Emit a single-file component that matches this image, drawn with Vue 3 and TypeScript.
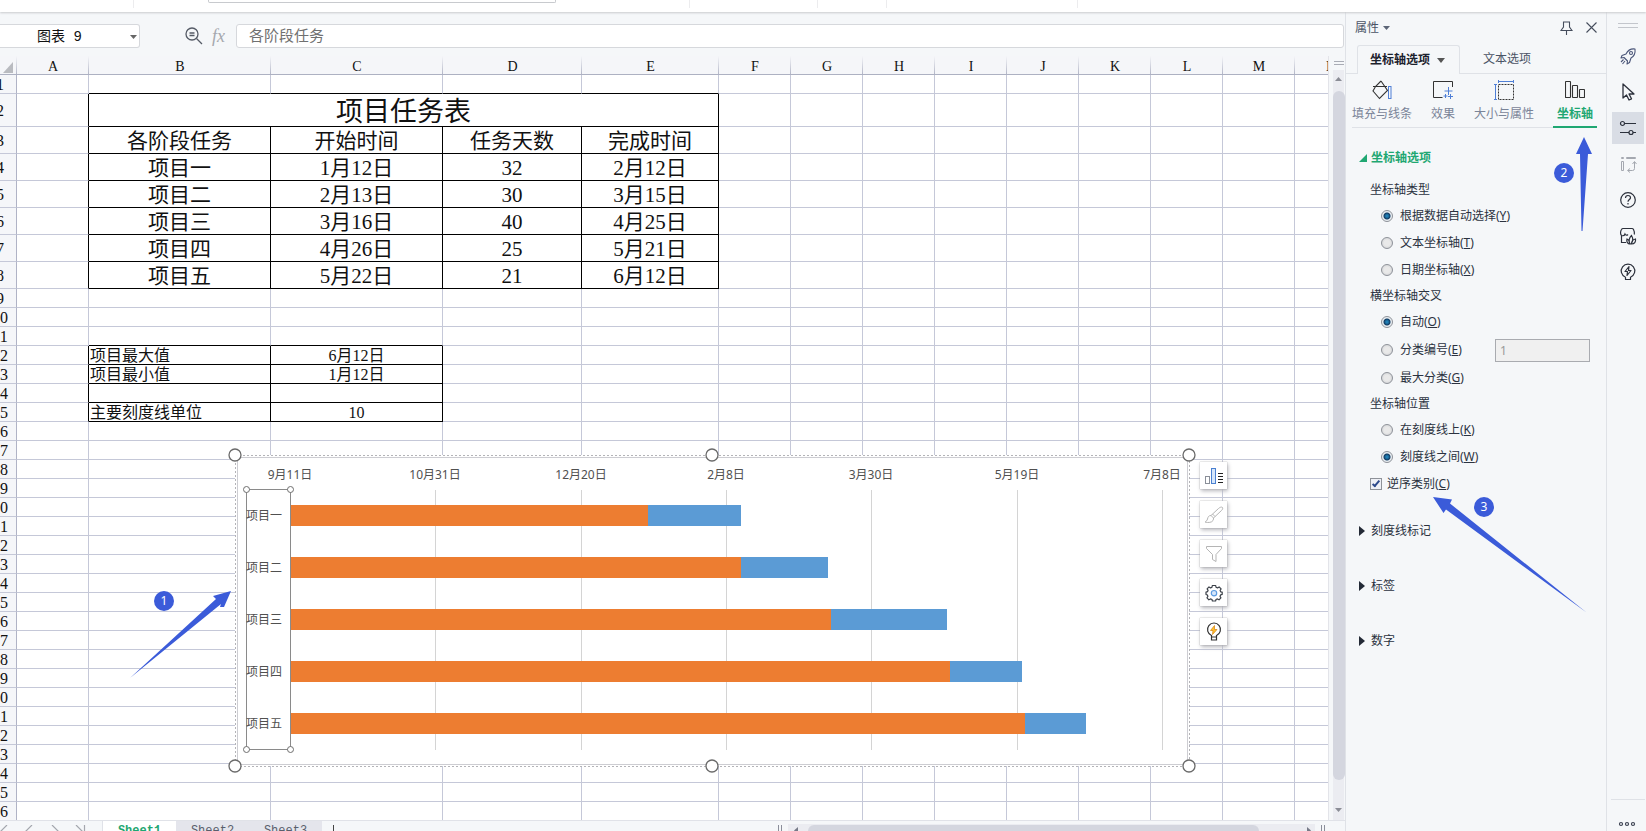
<script setup lang="ts">
import { ref } from 'vue'

interface Cell {
  key: string
  text: string
  span: number
  cls: string[]
}

interface SheetRow {
  n: number
  cls: string
  cells: Cell[]
}

const letters = ['A', 'B', 'C', 'D', 'E', 'F', 'G', 'H', 'I', 'J', 'K', 'L', 'M', 'N']

const values: Record<number, string[]> = {
  2: ['项目任务表'],
  3: ['各阶段任务', '开始时间', '任务天数', '完成时间'],
  4: ['项目一', '1月12日', '32', '2月12日'],
  5: ['项目二', '2月13日', '30', '3月15日'],
  6: ['项目三', '3月16日', '40', '4月25日'],
  7: ['项目四', '4月26日', '25', '5月21日'],
  8: ['项目五', '5月22日', '21', '6月12日'],
  12: ['项目最大值', '6月12日'],
  13: ['项目最小值', '1月12日'],
  14: ['', ''],
  15: ['主要刻度线单位', '10'],
}

function framedColumns(row: number): number {
  if (row >= 2 && row <= 8) return 4
  if (row >= 12 && row <= 15) return 2
  return 0
}

function buildRow(n: number): SheetRow {
  const here = framedColumns(n)
  const below = framedColumns(n + 1)
  const cells: Cell[] = []
  for (let c = 0; c < letters.length; c++) {
    const merged = n === 2 && c === 1
    const span = merged ? 4 : 1
    const last = c + span - 1
    const cls: string[] = []
    if (here > 0 && last <= here) cls.push('dark-right')
    if (c > 0 && (c <= here || c <= below)) cls.push('dark-bottom')
    if (n >= 12 && c === 1) cls.push('left')
    cells.push({
      key: letters[c] + n,
      text: c > 0 ? values[n]?.[c - 1] ?? '' : '',
      span,
      cls,
    })
    c = last
  }
  const cls = n === 2 ? 'title-row' : n >= 3 && n <= 8 ? 'task-row' : ''
  return { n, cls, cells }
}

const rows: SheetRow[] = Array.from({ length: 36 }, (_, i) => buildRow(i + 1))

const plot = { left: 63, top: 43, right: 935, bottom: 303, days: 300 }
const dayX = (d: number) => Math.round(plot.left + (d * (plot.right - plot.left)) / plot.days)
const ticks = ['9月11日', '10月31日', '12月20日', '2月8日', '3月30日', '5月19日', '7月8日'].map((label, i) => ({
  label,
  x: dayX(i * 50),
}))
const bars = [
  { name: '项目一', start: 123, days: 32 },
  { name: '项目二', start: 155, days: 30 },
  { name: '项目三', start: 186, days: 40 },
  { name: '项目四', start: 227, days: 25 },
  { name: '项目五', start: 253, days: 21 },
].map((b, i) => ({ ...b, y: 58 + i * 52, x1: dayX(b.start), x2: dayX(b.start + b.days) }))
const handles = [8, 485, 962].flatMap((x) => [8, 319].map((y) => ({ x, y })))
const axisHandles = [19, 63].flatMap((x) => [42, 302].map((y) => ({ x, y })))

const groups = [
  {
    name: 'type',
    title: '坐标轴类型',
    options: [
      { label: '根据数据自动选择', key: 'Y' },
      { label: '文本坐标轴', key: 'T' },
      { label: '日期坐标轴', key: 'X' },
    ],
  },
  {
    name: 'cross',
    title: '横坐标轴交叉',
    options: [
      { label: '自动', key: 'O' },
      { label: '分类编号', key: 'E' },
      { label: '最大分类', key: 'G' },
    ],
  },
  {
    name: 'position',
    title: '坐标轴位置',
    options: [
      { label: '在刻度线上', key: 'K' },
      { label: '刻度线之间', key: 'W' },
    ],
  },
]
const picked = ref<Record<string, string>>({ type: 'Y', cross: 'O', position: 'W' })
const reversed = ref(true)
const category = ref('1')
const formula = ref('各阶段任务')
const collapsed = ['刻度线标记', '标签', '数字']
</script>

<template>
  <div class="app">
    <header class="ribbon">
      <div class="ribbon-box"></div>
      <i class="sep s1"></i><i class="sep s2"></i><i class="sep s3"></i><i class="sep s4"></i><i class="sep s5"></i>
    </header>

    <div class="body">
      <main class="work">
        <div class="formula-row">
          <button class="name-box" type="button">
            <span>图表 9</span>
            <svg width="7" height="4" viewBox="0 0 7 4"><path d="M0 0h7L3.500 4z" fill="#666" /></svg>
          </button>
          <div class="fx-tools">
            <svg width="18" height="18" viewBox="0 0 18 18" fill="none" stroke="#555b66" stroke-width="1.300">
              <circle cx="7" cy="7" r="6" /><path d="M11.500 11.500L17 17M4.500 6h5M4.500 8.500h5" />
            </svg>
            <span class="fx">fx</span>
          </div>
          <input v-model="formula" class="formula" type="text" aria-label="编辑栏" />
        </div>

        <div class="sheet-area">
          <div class="sheet">
            <table class="grid">
              <colgroup>
                <col class="c-num" /><col class="c-std" /><col class="c-b" /><col class="c-c" /><col class="c-d" /><col class="c-e" />
                <col v-for="i in 9" :key="i" class="c-std" />
              </colgroup>
              <thead>
                <tr>
                  <th class="corner"><svg width="10" height="11" viewBox="0 0 10 11"><path d="M10 0v11H0z" fill="#b9bbc0" /></svg></th>
                  <th v-for="l in letters" :key="l" scope="col">{{ l }}</th>
                </tr>
              </thead>
              <tbody>
                <tr v-for="row in rows" :key="row.n" :class="row.cls">
                  <th scope="row">{{ row.n }}</th>
                  <td v-for="cell in row.cells" :key="cell.key" :colspan="cell.span" :class="cell.cls">{{ cell.text }}</td>
                </tr>
              </tbody>
            </table>

            <svg class="chart" width="970" height="328" viewBox="0 0 970 328">
              <rect x="8" y="8" width="954" height="311" fill="#fff" stroke="#b4b4b8" stroke-dasharray="2 2" shape-rendering="crispEdges" />
              <rect x="10" y="10" width="950" height="307" fill="#fff" stroke="#cdcdd2" shape-rendering="crispEdges" />
              <g v-for="t in ticks" :key="t.label">
                <rect :x="t.x" y="43" width="1" height="260" fill="#d4d4d4" />
                <text :x="t.x" y="32" text-anchor="middle">{{ t.label }}</text>
              </g>
              <rect x="19.500" y="42.500" width="44" height="260" fill="#fff" stroke="#8a8a8a" />
              <g v-for="b in bars" :key="b.name">
                <rect :x="plot.left + 1" :y="b.y" :width="b.x1 - plot.left - 1" height="21" fill="#ed7d31" />
                <rect :x="b.x1" :y="b.y" :width="b.x2 - b.x1" height="21" fill="#5b9bd5" />
                <text x="19" :y="b.y + 15">{{ b.name }}</text>
              </g>
              <circle v-for="(h, i) in axisHandles" :key="'a' + i" :cx="h.x + 0.5" :cy="h.y + 0.5" r="3" fill="#fff" stroke="#6e6e6e" />
              <circle v-for="(h, i) in handles" :key="'h' + i" :cx="h.x" :cy="h.y" r="6" fill="#fff" stroke="#6a6a6a" stroke-width="1.300" />
            </svg>

            <div class="chart-tools">
              <button type="button" aria-label="图表元素">
                <svg width="20" height="20" viewBox="0 0 20 20" fill="none">
                  <rect x="1.500" y="10.500" width="4" height="7" stroke="#8a8f98" /><rect x="7.500" y="2.500" width="4" height="15" fill="#d5e6fb" stroke="#4a80d0" />
                  <path d="M14 7.500h5M14 10.500h5M14 13.500h5M14 16.500h5" stroke="#222" />
                </svg>
              </button>
              <button type="button" aria-label="图表样式">
                <svg width="20" height="20" viewBox="0 0 20 20" fill="none" stroke="#b5b5b5" stroke-linejoin="round">
                  <path d="M18.500 2.500c-1-1-3 0-4 1L7 10.500l2.500 2.500L17.500 5.500c1-1 1.500-2 1-3zM7 10.500c-2.500 0-3 1.500-3.500 3.500-.3 1.500-1.500 2.500-2.500 3 3 1 7 .5 8-1.500.6-1 .5-2 .5-2.500M8.500 9l2.500 2.500" />
                </svg>
              </button>
              <button type="button" aria-label="图表筛选器">
                <svg width="20" height="20" viewBox="0 0 20 20" fill="none" stroke="#b5b5b5" stroke-linejoin="round"><path d="M2.500 2.500h15v2L12 10.500v7l-3.500-2v-5L2.500 4.500z" /></svg>
              </button>
              <button type="button" aria-label="设置">
                <svg width="20" height="20" viewBox="0 0 20 20" fill="none" stroke="#3b4048" stroke-width="1.200" stroke-linejoin="round">
                  <path d="M8.300 2.500h3.400l.3 1.700 1.500.7 1.600-1 2 2-1 1.600.6 1.300 1.500.3v2.300l-1.600.5-.6 1.400.9 1.600-1.900 1.900-1.600-.9-1.400.6-.4 1.500H8.400L8 16.500l-1.500-.6-1.600.9-1.900-1.900.9-1.600-.6-1.400-1.300-.4V9.100l1.500-.4.6-1.400-1-1.500 1.900-1.900 1.600 1 1.400-.7z" />
                  <circle cx="10" cy="10.200" r="2.700" fill="#d5e6fb" stroke="#5b9be0" />
                </svg>
              </button>
              <button type="button" aria-label="智能推荐">
                <svg width="20" height="20" viewBox="0 0 20 20" fill="none" stroke="#333" stroke-width="1.200">
                  <path d="M7.500 15v-1.500a6.500 6.500 0 1 1 5 0V15zM7.500 15v3h5v-3" /><path d="M10.500 3.500l-4 5h2.500l-.5 4 4.500-5h-2.500z" fill="#ffc12e" stroke="#d98a1c" stroke-width=".8" />
                </svg>
              </button>
            </div>

            <svg class="arrow-one" width="104" height="90" viewBox="0 0 104 90"><path d="M102 1L84 6l3 3L1 88 92 14l-1 3 4 0z" fill="#3b5bd9" /></svg>
            <b class="dot dot-one">1</b>
          </div>

          <div class="vscroll">
            <i class="grip"></i>
            <div class="vtrack">
              <svg width="7" height="4" viewBox="0 0 7 4"><path d="M0 4h7L3.500 0z" fill="#8b8d96" /></svg>
              <i class="vthumb"></i>
              <svg width="7" height="4" viewBox="0 0 7 4"><path d="M0 0h7L3.500 4z" fill="#8b8d96" /></svg>
            </div>
          </div>
        </div>

        <footer class="tabs">
          <nav class="sheet-nav">
            <svg width="92" height="12" viewBox="0 0 92 12" fill="none" stroke="#a4a7ae" stroke-width="1.200">
              <path d="M7 0L1 6l6 6M32 0l-6 6 6 6M52 0l6 6-6 6M76 0l6 6-6 6M84.500 0v12" />
            </svg>
          </nav>
          <button class="tab active" type="button">Sheet1</button>
          <button class="tab" type="button">Sheet2</button>
          <button class="tab" type="button">Sheet3</button>
          <button class="add" type="button" aria-label="新建工作表"><svg width="13" height="13" viewBox="0 0 13 13"><path d="M6.500 0v13M0 6.500h13" stroke="#444" /></svg></button>
          <div class="hscroll">
            <i class="split"></i>
            <div class="htrack">
              <svg width="4" height="7" viewBox="0 0 4 7"><path d="M4 0v7L0 3.500z" fill="#777a88" /></svg>
              <i class="hthumb"></i>
              <svg width="4" height="7" viewBox="0 0 4 7"><path d="M0 0v7l4-3.500z" fill="#777a88" /></svg>
            </div>
            <i class="split"></i>
          </div>
        </footer>
      </main>

      <aside class="panel">
        <div class="panel-head">
          <span>属性</span>
          <svg width="7" height="4" viewBox="0 0 7 4"><path d="M0 0h7L3.500 4z" fill="#5c6577" /></svg>
          <button class="pin" type="button" aria-label="固定"><svg width="13" height="14" viewBox="0 0 13 14" fill="none" stroke="#454d5c" stroke-width="1.100"><path d="M3.500 1h6v5l2.500 3.500H1L3.500 6zM6.500 9.500V14" /></svg></button>
          <button type="button" aria-label="关闭"><svg width="11" height="11" viewBox="0 0 11 11" stroke="#454d5c" stroke-width="1.100"><path d="M.5.5l10 10M10.500.5l-10 10" /></svg></button>
        </div>

        <div class="main-tabs">
          <button class="on" type="button">坐标轴选项<svg width="8" height="5" viewBox="0 0 8 5"><path d="M0 0h8L4 5z" fill="#555" /></svg></button>
          <button type="button">文本选项</button>
        </div>

        <div class="sub-tabs">
          <button type="button">
            <svg width="20" height="20" viewBox="0 0 20 20" fill="none"><path d="M1 6.500h14M9 1L3.500 6.500 1 11l6.500 7.500 8-8L9 1" stroke="#333" stroke-width="1.100" /><rect x="16.500" y="6.500" width="2.500" height="12" stroke="#4f7fd6" /></svg>
            <span>填充与线条</span>
          </button>
          <button type="button">
            <svg width="20" height="20" viewBox="0 0 20 20" fill="none"><path d="M9.500 17.500H.5V1.500h19V7" stroke="#333" /><path d="M15.500 7v8M11.500 11h8M17.500 14v5M15 16.500h5M12.500 14v4M10.500 16h4" stroke="#4f7fd6" /></svg>
            <span>效果</span>
          </button>
          <button type="button">
            <svg width="20" height="20" viewBox="0 0 20 20" fill="none"><rect x="4.500" y="4.500" width="15" height="15" stroke="#333" stroke-dasharray="2 1" /><path d="M1.500 4v16M0 4.500h3M0 19.500h3M4 1.500h16M4.500 0v3M19.500 0v3" stroke="#4f7fd6" /></svg>
            <span>大小与属性</span>
          </button>
          <button class="on" type="button">
            <svg width="20" height="20" viewBox="0 0 20 20" fill="none" stroke="#333" stroke-width="1.100"><rect x=".5" y="1.500" width="5" height="16" rx=".5" /><rect x="7.500" y="5.500" width="5" height="12" rx=".5" /><rect x="14.500" y="9.500" width="5" height="8" rx=".5" /></svg>
            <span>坐标轴</span>
          </button>
        </div>

        <div class="options">
          <button class="section open" type="button"><svg width="8" height="8" viewBox="0 0 8 8"><path d="M8 0v8H0z" fill="#1fa772" /></svg>坐标轴选项</button>

          <fieldset v-for="g in groups" :key="g.name" :class="g.name">
            <legend>{{ g.title }}</legend>
            <div v-for="o in g.options" :key="o.key" class="opt">
              <label><input v-model="picked[g.name]" type="radio" :name="g.name" :value="o.key" /><span>{{ o.label }}(<u>{{ o.key }}</u>)</span></label>
              <input v-if="o.key === 'E'" v-model="category" class="num" type="text" aria-label="分类编号" disabled />
            </div>
          </fieldset>

          <label class="check"><input v-model="reversed" type="checkbox" /><span>逆序类别(<u>C</u>)</span></label>

          <button v-for="s in collapsed" :key="s" class="section shut" type="button"><svg width="6" height="10" viewBox="0 0 6 10"><path d="M0 0l6 5-6 5z" fill="#232a36" /></svg>{{ s }}</button>
        </div>

        <svg class="arrow-two" width="18" height="96" viewBox="0 0 18 96"><path d="M9 1l8 17h-4L7.500 95h-1L5 18H1z" fill="#3b5bd9" /></svg>
        <b class="dot dot-two">2</b>
        <svg class="arrow-three" width="156" height="118" viewBox="0 0 156 118"><path d="M1 1l19 2.500-2 4L154.500 116.500 14 13.500 11.500 17z" fill="#3b5bd9" /></svg>
        <b class="dot dot-three">3</b>
      </aside>

      <nav class="rail">
        <i class="grip"></i>
        <button type="button" aria-label="快速启动"><svg width="18" height="18" viewBox="0 0 18 18" fill="none" stroke="#4a5578" stroke-width="1.100" stroke-linejoin="round"><path d="M16 2c-4-.5-7 1-9 5L3 8.500 2 11l3-.5 3.500 3.500L8 17l2.500-1.500L12 11c3.500-2 4.500-5 4-9zM4.500 12.500L2 15M6 14l-2.500 3M5 10.500l3.500 3.500" /><circle cx="12" cy="6" r="1.500" /></svg></button>
        <button type="button" aria-label="选择"><svg width="18" height="18" viewBox="0 0 18 18" fill="none" stroke="#2c313c" stroke-width="1.300" stroke-linejoin="round"><path d="M4 1v14l3.500-3 2.500 5 2.500-1.200L10 11h5z" /></svg></button>
        <button class="on" type="button" aria-label="属性"><svg width="18" height="18" viewBox="0 0 18 18" fill="none" stroke="#2c313c" stroke-width="1.200"><circle cx="3.500" cy="4.500" r="2" /><path d="M5.500 4.500H17M1 13.500h9M14 13.500h3" /><circle cx="12" cy="13.500" r="2" /></svg></button>
        <button type="button" aria-label="分析"><svg width="18" height="18" viewBox="0 0 18 18" fill="none" stroke="#a4a8b0"><path d="M2.500 2.500h2v1h-2zM7.500 2.500h9v1h-9zM2.500 6.500h2v9h-2zM9 15.500h4.500q2 0 2-2V7M13.500 9l2-2.500 2 2.500M11 13.500L8.500 15.500 11 17.500" /></svg></button>
        <button type="button" aria-label="帮助"><svg width="18" height="18" viewBox="0 0 18 18" fill="none" stroke="#2c313c" stroke-width="1.200"><circle cx="9" cy="9" r="7.300" /><path d="M6.500 7c0-3.300 5-3.300 5-.3 0 1.800-2.500 1.800-2.500 4M9 12v1.500" /></svg></button>
        <button type="button" aria-label="稻壳"><svg width="18" height="18" viewBox="0 0 18 18" fill="none" stroke="#2c313c" stroke-width="1.200"><path d="M7 15.500H2.500V8.500M2.500 8.500C1 7 1.500 4 2.500 2.500q.5-1 1.500-1h9q1 0 1.500 1c1 2 1.200 3.500.8 5M2.500 8.500c1.500.5 3 0 3.500-1.500.8 1.500 2 1.500 3 .5" /><path d="M10 17c-2-1-2.500-3-2-5 1.500.5 2.500 2 2.500 4.500M11 17c-1.500-3-.5-6.500 1.500-8.500 1.500 2.500 1.500 6-.5 8.500M12.500 17c0-2.500 1.500-4.500 4-5 .5 3-1 5-4 5h-3" /></svg></button>
        <button type="button" aria-label="灵感"><svg width="18" height="18" viewBox="0 0 18 18" fill="none" stroke="#2c313c" stroke-width="1.200" stroke-linejoin="round"><path d="M6.500 16.500v-2.300a6.800 6.800 0 1 1 5 0v2.300z" /><path d="M10 3.500l-4 5h2.500l-.5 4 4-5H9.500z" /></svg></button>
        <div class="more"><button type="button" aria-label="更多"><svg width="18" height="6" viewBox="0 0 18 6" fill="none" stroke="#3a4050" stroke-width="1.200"><circle cx="3" cy="3" r="1.500" /><circle cx="9" cy="3" r="1.500" /><circle cx="15" cy="3" r="1.500" /></svg></button></div>
      </nav>
    </div>
  </div>
</template>

<style>
body {
  margin: 0;
  overflow: hidden;
}
</style>

<style scoped>
.app {
  display: flex;
  flex-direction: column;
  height: 100vh;
  overflow: hidden;
  background: #f5f7f9;
  color: #2b3240;
  font: 12px/18px "Noto Sans", "Noto Sans CJK SC", sans-serif;
}
.app *,
.app *::before {
  box-sizing: border-box;
}
button {
  margin: 0;
  padding: 0;
  border: 0;
  background: none;
  color: inherit;
  font: inherit;
}
svg {
  display: block;
  flex: none;
}
i {
  display: block;
}

.ribbon {
  position: relative;
  z-index: 2;
  display: flex;
  flex: 0 0 12px;
  background: #fff;
  box-shadow: 0 1px 2px #c9cbce;
}
.ribbon-box {
  order: 2;
  width: 348px;
  height: 3px;
  margin-left: 74px;
  border: 1px solid #c8cace;
  border-top: 0;
  border-radius: 0 0 2px 2px;
}
.sep {
  order: 3;
  width: 1px;
  height: 8px;
  background: #ececee;
}
.s1 {
  order: 1;
  margin-left: 133px;
}
.s2 {
  margin-left: 133px;
}
.s3 {
  margin-left: 127px;
}
.s4 {
  margin-left: 68px;
}
.s5 {
  margin-left: 190px;
}

.body {
  display: flex;
  flex: 1;
  min-height: 0;
}
.work {
  display: flex;
  flex: 1;
  flex-direction: column;
  min-width: 0;
}
.formula-row {
  display: flex;
  flex: 0 0 44px;
  align-items: flex-start;
  padding: 12px 1px 0 0;
}
.name-box {
  display: flex;
  align-items: center;
  width: 140px;
  height: 24px;
  padding: 2px 2px 0 37px;
  border: 1px solid #d6d8dc;
  border-left: 0;
  border-radius: 0 3px 3px 0;
  background: #fff;
  color: #111;
  font: 14px/20px "Liberation Mono", "Noto Sans CJK SC", monospace;
}
.name-box svg {
  margin-left: auto;
}
.fx-tools {
  display: flex;
  align-items: center;
  gap: 9px;
  width: 96px;
  height: 24px;
  padding-left: 45px;
}
.fx {
  color: #a5a8ae;
  font: italic 18px/24px "Liberation Serif", serif;
}
.formula {
  flex: 1;
  min-width: 0;
  height: 24px;
  padding: 0 12px 4px;
  border: 1px solid #d6d8dc;
  border-radius: 3px;
  background: #fff;
  color: #707070;
  font: 15px/18px "Noto Sans CJK SC", sans-serif;
}

.sheet-area {
  display: flex;
  flex: 1;
  min-height: 0;
}
.sheet {
  position: relative;
  flex: 1;
  min-width: 0;
  overflow: hidden;
  background: #fff;
}
.grid {
  width: 1383px;
  margin-left: -16px;
  border-collapse: separate;
  border-spacing: 0;
  table-layout: fixed;
  color: #111;
  font: 16px/16px "Liberation Serif", "Noto Sans CJK SC", serif;
}
.c-num {
  width: 33px;
}
.c-std {
  width: 72px;
}
.c-b {
  width: 182px;
}
.c-c {
  width: 172px;
}
.c-d {
  width: 139px;
}
.c-e {
  width: 137px;
}
th,
td {
  height: 19px;
  padding: 2px 0 0;
  border-right: 1px solid #c5c8d8;
  border-bottom: 1px solid #c5c8d8;
  font-weight: 400;
  text-align: center;
  white-space: nowrap;
}
thead th {
  padding-top: 4px;
  border-right: 0;
  border-bottom-color: #adb1c2;
  background: linear-gradient(#f5f6f9, #b4b7c8) right / 1px 100% no-repeat #f5f6f9;
  font-size: 14px;
  line-height: 14px;
}
.corner svg {
  margin: 0 0 0 19px;
}
tbody th {
  border-right-color: #b0b3c6;
  background: #f5f6f9;
}
td.left {
  padding-left: 1px;
  text-align: left;
}
td.dark-right {
  border-right-color: #000;
}
td.dark-bottom {
  border-bottom-color: #000;
}
.title-row td {
  height: 33px;
  padding-top: 4px;
  font-size: 27px;
  line-height: 28px;
}
.task-row td {
  height: 27px;
  padding-top: 3px;
  font-size: 21px;
  line-height: 23px;
}

.chart {
  position: absolute;
  top: 391px;
  left: 227px;
  overflow: visible;
}
.chart text {
  fill: #505050;
  font: 12px "Noto Sans", "Noto Sans CJK SC", sans-serif;
}
.chart-tools {
  position: absolute;
  top: 406px;
  left: 1200px;
  display: flex;
  flex-direction: column;
  gap: 12px;
}
.chart-tools button {
  display: grid;
  place-items: center;
  width: 27px;
  height: 27px;
  background: #fff;
  box-shadow: 0 0 1px #999, 1px 2px 4px #b5b5bb;
}
.dot {
  position: absolute;
  width: 20px;
  height: 20px;
  border-radius: 50%;
  background: #3b5bd9;
  color: #fff;
  font: 400 12px/20px "Noto Sans", sans-serif;
  text-align: center;
}
.arrow-one,
.arrow-two,
.arrow-three {
  position: absolute;
  pointer-events: none;
}
.arrow-one {
  top: 534px;
  left: 129px;
}
.dot-one {
  top: 535px;
  left: 154px;
}

.vscroll {
  display: flex;
  flex-direction: column;
  width: 17px;
  padding: 5px 1px 0 4px;
  border-left: 1px solid #e3e4e9;
}
.vscroll .grip {
  align-self: center;
  width: 10px;
}
.grip {
  height: 4px;
  border: solid #a9acb5;
  border-width: 1px 0;
}
.vtrack {
  display: flex;
  flex: 1;
  flex-direction: column;
  align-items: center;
  justify-content: space-between;
  margin-top: 5px;
  padding: 7px 0 8px;
  background: #ebecf1;
}
.vthumb {
  flex: 1;
  width: 12px;
  margin: 10px 0 28px;
  border-radius: 6px;
  background: #d4d6df;
}

.tabs {
  display: flex;
  flex: 0 0 11px;
  overflow: hidden;
  border-top: 1px solid #e0e2e8;
}
.sheet-nav {
  width: 103px;
  padding-top: 4px;
  border-right: 1px solid #e0e2e8;
}
.tab {
  display: flex;
  justify-content: center;
  width: 73px;
  height: 28px;
  background: #e4e5ec;
  color: #5a5f6c;
  font: 12px/20px "Liberation Mono", monospace;
}
.tab.active {
  background: #fff;
  color: #1fa772;
  font-weight: 700;
}
.add {
  align-self: flex-start;
  padding: 4px 0 0 5px;
}
.hscroll {
  display: flex;
  flex: 1;
  gap: 6px;
  margin-left: 438px;
  padding-right: 20px;
}
.split {
  width: 4px;
  height: 10px;
  margin-top: 4px;
  border: solid #8b8e9a;
  border-width: 0 1px;
}
.htrack {
  display: flex;
  flex: 1;
  align-items: flex-start;
  height: 18px;
  margin-top: 3px;
  padding: 3px 4px 0 6px;
  background: #ebecf1;
}
.hthumb {
  flex: 1;
  height: 12px;
  margin: -2px 48px 0 10px;
  border-radius: 6px;
  background: #d4d6df;
}

.panel {
  position: relative;
  display: flex;
  flex: 0 0 262px;
  flex-direction: column;
  min-width: 0;
  border: solid #dfe2e7;
  border-width: 0 1px;
}
.panel-head {
  display: flex;
  align-items: center;
  height: 33px;
  padding: 0 9px 2px;
  color: #4a5365;
}
.panel-head > svg {
  margin-left: 4px;
}
.pin {
  margin: 0 13px 0 auto;
}
.main-tabs {
  display: flex;
  height: 29px;
  padding-left: 11px;
  border-bottom: 1px solid #dfe2e7;
  color: #4a5365;
}
.main-tabs button {
  width: 94px;
}
.main-tabs .on {
  display: flex;
  flex: 0 0 103px;
  align-items: center;
  height: 29px;
  padding-left: 12px;
  border: 1px solid #dfe2e7;
  border-bottom: 0;
  border-radius: 3px 3px 0 0;
  background: #f5f7f9;
  color: #1c222d;
  font-weight: 700;
}
.main-tabs .on svg {
  margin-left: 7px;
}
.sub-tabs {
  display: flex;
  justify-content: space-between;
  height: 54px;
  margin: 0 9px 0 6px;
  border-bottom: 1px solid #dfe2e7;
  color: #7a8498;
}
.sub-tabs button {
  display: flex;
  flex-direction: column;
  align-items: center;
  gap: 5px;
  height: 54px;
  padding-top: 6px;
}
.sub-tabs .on {
  width: 44px;
  border-bottom: 2px solid #1fa772;
  color: #1fa772;
  font-weight: 700;
}
.options {
  display: flex;
  flex-direction: column;
  padding: 18px 13px 0;
}
.section {
  display: flex;
  align-items: center;
  text-align: left;
}
.open {
  gap: 4px;
  height: 24px;
  margin-bottom: 8px;
  color: #1fa772;
  font-weight: 700;
}
.shut {
  gap: 6px;
  height: 55px;
}
fieldset {
  min-width: 0;
  margin: 0;
  padding: 0;
  border: 0;
}
.type {
  padding-bottom: 1px;
}
legend {
  height: 24px;
  padding: 0 0 0 11px;
  line-height: 24px;
}
.opt {
  display: flex;
  align-items: center;
  justify-content: space-between;
  height: 27px;
  padding: 0 3px 0 22px;
}
.cross .opt {
  height: 28px;
}
.opt label,
.check {
  display: flex;
  align-items: center;
  gap: 7px;
}
input[type="radio"],
input[type="checkbox"] {
  flex: none;
  width: 12px;
  height: 12px;
  margin: 0;
  border: 1px solid #8e9299;
  background: radial-gradient(#e9e9e9 40%, #c9cbcf);
  appearance: none;
}
input[type="radio"] {
  border-radius: 50%;
}
input[type="radio"]:checked {
  background: radial-gradient(circle at 50% 50%, #1f7fb5 0 1px, #123c63 3px, #e9eef2 4px);
}
.check {
  gap: 5px;
  height: 27px;
  margin-bottom: 6px;
  padding-left: 11px;
}
input[type="checkbox"] {
  position: relative;
  background: #eef0f6;
}
input[type="checkbox"]:checked::before {
  position: absolute;
  top: 0;
  left: 3px;
  width: 4px;
  height: 8px;
  border: solid #2d4a8c;
  border-width: 0 2px 2px 0;
  content: "";
  transform: rotate(40deg);
}
.num {
  width: 95px;
  height: 23px;
  padding: 0 4px;
  border: 1px solid #a9abb0;
  background: #f0f0f0;
  color: #999;
  font: 12px/18px "Noto Sans", sans-serif;
}
.arrow-two {
  top: 124px;
  left: 229px;
}
.dot-two {
  top: 151px;
  left: 208px;
}
.arrow-three {
  top: 484px;
  left: 86px;
}
.dot-three {
  top: 485px;
  left: 128px;
}

.rail {
  display: flex;
  flex: 0 0 39px;
  flex-direction: column;
  align-items: center;
  gap: 4px;
  padding: 11px 1px 0 4px;
}
.rail .grip {
  width: 20px;
  height: 5px;
  margin-bottom: 8px;
  border-color: #c3c6cc;
}
.rail button {
  display: grid;
  flex: none;
  place-items: center;
  width: 32px;
  height: 32px;
}
.rail .on {
  background: #d9dde5;
}
.more {
  width: 100%;
  height: 32px;
  margin-top: auto;
  padding-top: 8px;
  border-top: 1px solid #dfe2e7;
}
</style>
